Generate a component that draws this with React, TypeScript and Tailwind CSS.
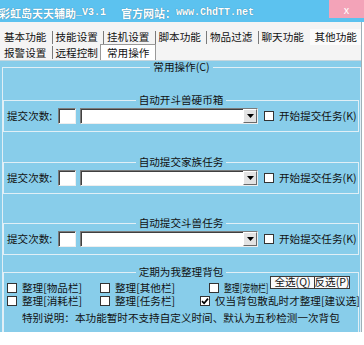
import React from "react";

const sunken =
  "bg-white border border-t-[#7b7b7b] border-l-[#7b7b7b] border-b-[#eeeeee] border-r-[#eeeeee] shadow-[inset_1px_1px_0_#404040]";

type GroupProps = {
  title: string;
  className?: string;
  children?: React.ReactNode;
};

function Group({ title, className = "", children }: GroupProps) {
  return (
    <fieldset className={`min-w-0 border border-[#e1eff6] ${className}`}>
      <legend className="mx-auto px-[3px] leading-[12px]">{title}</legend>
      {children}
    </fieldset>
  );
}

function CheckBox({ checked = false, className = "" }: { checked?: boolean; className?: string }) {
  return (
    <span
      className={`w-[10px] h-[10px] shrink-0 bg-white border border-[#333] flex items-center justify-center ${className}`}
    >
      {checked && (
        <svg width="8" height="8" viewBox="0 0 8 8">
          <path d="M1 4.2 L3.1 6.3 L7 1.6" stroke="#000" strokeWidth="1.7" fill="none" />
        </svg>
      )}
    </span>
  );
}

function TaskRow() {
  return (
    <div className="flex items-center pl-[3px] pt-[2px] pb-[7px]">
      <span className="w-[51px] leading-[16px]">提交次数:</span>
      <span className={`w-[18px] h-[16px] ${sunken}`} />
      <div className={`ml-[4px] w-[178px] h-[16px] flex justify-end ${sunken}`}>
        <span className="w-[14px] h-full bg-[#e3e3e3] border border-t-white border-l-white border-b-[#6a6a6a] border-r-[#6a6a6a] flex items-center justify-center">
          <svg width="7" height="4" viewBox="0 0 7 4">
            <path d="M0 0H7L3.5 4Z" fill="#000" />
          </svg>
        </span>
      </div>
      <CheckBox className="ml-[6px]" />
      <span className="ml-[5px] leading-[16px] whitespace-nowrap">开始提交任务(K)</span>
    </div>
  );
}

function Opt({ label, checked = false, className = "" }: { label: string; checked?: boolean; className?: string }) {
  return (
    <div className={`flex items-center shrink-0 ${className}`}>
      <CheckBox checked={checked} />
      <span className="ml-[5px] whitespace-nowrap leading-[11px]">{label}</span>
    </div>
  );
}

function Tab({ label, sep = true }: { label: string; sep?: boolean }) {
  return (
    <>
      <span className="w-[44.5px] shrink-0 whitespace-nowrap">{label}</span>
      {sep && <span className="w-px h-[13px] bg-[#7a7a7a] mx-[3px] shrink-0" />}
    </>
  );
}

export default function App() {
  return (
    <div className="w-[364px] h-[345px] bg-white overflow-hidden font-['Noto_Sans_CJK_SC','Noto_Sans_CJK_JP',sans-serif] text-[10.6px] text-[#111]">
      {/* title bar */}
      <div className="h-[22px] bg-[#5cc2ef] flex text-white font-bold">
        <div className="pt-[7px] leading-[12px] ml-[-1px] text-[11px] whitespace-nowrap flex [text-shadow:0_0_1px_#2a6f90]">
          <span>彩虹岛天天辅助</span>
          <span className="font-['Liberation_Mono',monospace] text-[10px]">_V3.1</span>
          <span className="ml-[15px]">官方网站：</span>
          <span className="font-['Liberation_Mono',monospace] text-[10px]">www.ChdTT.net</span>
        </div>
        <div className="ml-auto w-[35px] h-[18px] bg-[#f3a3b8] flex items-center justify-center font-normal text-[11px] leading-none">
          x
        </div>
      </div>

      <div className="w-[362px] border-r border-[#9fb0b8]">
        {/* tabs */}
        <div className="h-[38px] bg-[#f4f4f4] pt-[7px]">
          <div className="h-[16px] flex items-center pl-[4px] leading-[12px]">
            <Tab label="基本功能" />
            <Tab label="技能设置" />
            <Tab label="挂机设置" />
            <Tab label="脚本功能" />
            <Tab label="物品过滤" />
            <Tab label="聊天功能" sep={false} />
            <span className="ml-[3.5px] h-full flex items-center pl-[5px] bg-[#fbfbfb] flex-1 whitespace-nowrap">
              其他功能
            </span>
          </div>
          <div className="h-[15px] flex items-center pl-[4px] leading-[12px]">
            <Tab label="报警设置" />
            <Tab label="远程控制" sep={false} />
            <span className="-mt-[1px] h-[16px] w-[56px] self-start bg-white border-l border-t border-r border-[#999] pl-[6px] flex items-center whitespace-nowrap">
              常用操作
            </span>
          </div>
        </div>

        {/* panel */}
        <div className="h-[272px] bg-[#88cdea] border-t border-[#c5d6de] overflow-hidden">
          <Group title="常用操作(C)" className="ml-[2px] w-[359px] h-[300px] border-b-0">
            <Group title="自动开斗兽硬币箱" className="mt-[21px] w-[356px]">
              <TaskRow />
            </Group>
            <Group title="自动提交家族任务" className="mt-[24px] w-[356px]">
              <TaskRow />
            </Group>
            <Group title="自动提交斗兽任务" className="mt-[23px] w-[356px]">
              <TaskRow />
            </Group>
            <Group title="定期为我整理背包" className="mt-[11px] w-[356px] h-[90px] border-b-0">
              <div className="flex items-center h-[13px] mt-[3px] pl-[3px]">
                <Opt label="整理[物品栏]" className="w-[93px]" />
                <Opt label="整理[其他栏]" className="w-[109px]" />
                <div className="flex items-center w-[61px] shrink-0">
                  <CheckBox />
                  <span className="ml-[5px] w-[45px] whitespace-nowrap leading-[11px]">
                    <span className="inline-block origin-left scale-x-[0.74]">整理[宠物栏]</span>
                  </span>
                </div>
                <div className="flex self-start -mt-[5px] h-[13px] leading-none">
                  <span className="w-[45px] h-full bg-[#fafafa] border border-[#3a3a3a] flex items-center justify-center whitespace-nowrap">
                    全选(Q)
                  </span>
                  <span className="w-[35px] h-full bg-[#fafafa] border border-l-0 border-[#3a3a3a] flex items-center justify-center whitespace-nowrap">
                    反选(P)
                  </span>
                </div>
              </div>
              <div className="flex items-center h-[13px] pl-[3px]">
                <Opt label="整理[消耗栏]" className="w-[93px]" />
                <Opt label="整理[任务栏]" className="w-[100px]" />
                <Opt label="仅当背包散乱时才整理[建议选]" checked />
              </div>
              <div className="mt-[5px] pl-[18px] leading-[12px] whitespace-nowrap">
                特别说明：本功能暂时不支持自定义时间、默认为五秒检测一次背包
              </div>
            </Group>
          </Group>
        </div>
      </div>
    </div>
  );
}
